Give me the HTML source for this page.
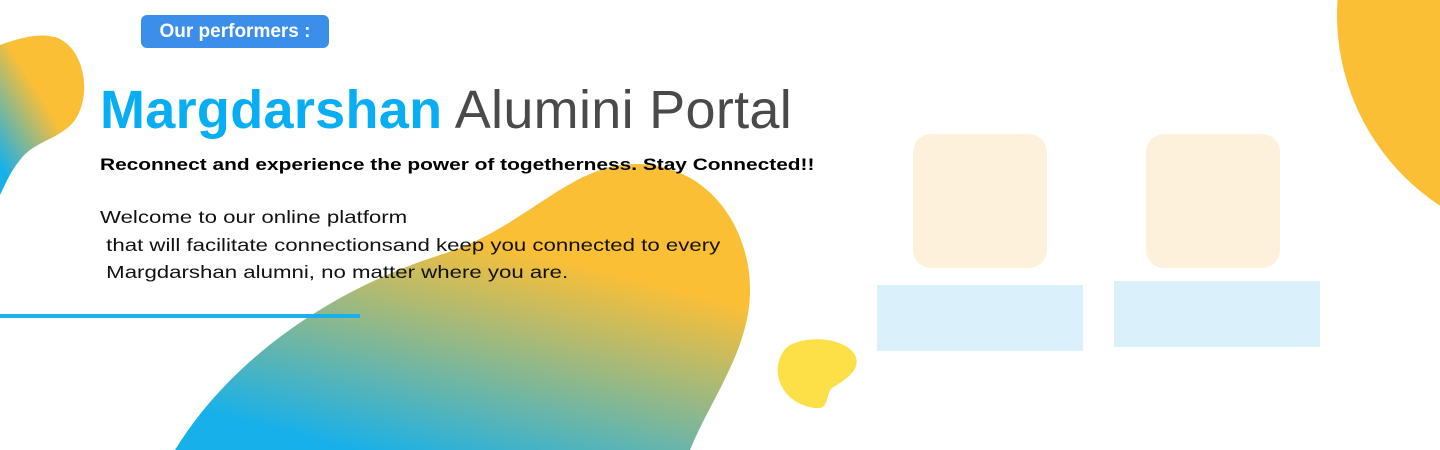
<!DOCTYPE html>
<html><head><style>
body{margin:0;width:1440px;height:450px;overflow:hidden;background:#fff;position:relative;font-family:"Liberation Sans",sans-serif}
.a{position:absolute}
</style></head><body>
<svg class="a" style="left:0;top:0" width="1440" height="450">
<defs>
<linearGradient id="g1" x1="0.7" y1="0.25" x2="0.3" y2="1">
<stop offset="0.1" stop-color="#fbbf36"/><stop offset="1" stop-color="#17b0ea"/></linearGradient>
<linearGradient id="g2" x1="0.7" y1="0.2" x2="0.1" y2="0.9">
<stop offset="0.3" stop-color="#fbbf36"/><stop offset="1" stop-color="#17b0ea"/></linearGradient>
</defs>
<path d="M175 450 C230 360 330 290 440 255 C520 230 560 175 620 165 C700 155 750 220 750 290 C750 350 710 400 690 450 Z" fill="url(#g1)"/>
<path d="M0 45 C20 38 40 32 58 38 C85 50 92 95 75 120 C60 140 35 140 20 160 C10 172 5 185 0 195 Z" fill="url(#g2)"/>
<path d="M790 345 C810 335 845 338 855 355 C862 370 845 380 832 388 C825 395 830 410 815 408 C790 405 775 385 778 365 C780 355 784 349 790 345 Z" fill="#fde047"/>
<circle cx="1565" cy="15" r="228" fill="#fbbf36"/>
<rect x="913" y="134" width="134" height="134" rx="18" fill="#fdf1db"/>
<rect x="1146" y="134" width="134" height="134" rx="18" fill="#fdf1db"/>
<rect x="877" y="285" width="206" height="66" fill="#daf0fb"/>
<rect x="1114" y="281" width="206" height="66" fill="#daf0fb"/>
<rect x="0" y="314" width="360" height="4" fill="#1ab0ee"/>
</svg>
<div class="a" style="left:141px;top:15px;width:188px;height:33px;background:#3b8eea;border-radius:6px;color:#fff;font-weight:bold;font-size:19px;line-height:33px;text-align:center">Our performers :</div>
<div class="a" style="left:100px;top:78px;font-size:54px;line-height:64px;white-space:nowrap;letter-spacing:0.3px"><b style="color:#07aef3">Margdarshan</b> <span style="color:#4a4a4a">Alumini Portal</span></div>
<div class="a" style="left:100px;top:153px;font-size:16.5px;font-weight:bold;color:#000;white-space:nowrap;line-height:24px;transform:scaleX(1.265);transform-origin:0 0">Reconnect and experience the power of togetherness. Stay Connected!!</div>
<div class="a" style="left:100px;top:204px;font-size:17.5px;color:#111;white-space:pre;line-height:27.5px;transform:scaleX(1.27);transform-origin:0 0">Welcome to our online platform
 that will facilitate connectionsand keep you connected to every
 Margdarshan alumni, no matter where you are.</div>
</body></html>
